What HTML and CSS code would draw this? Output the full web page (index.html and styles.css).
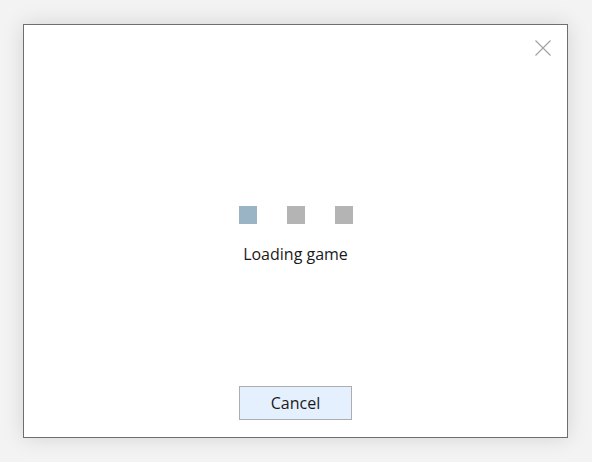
FILE: index.html
```html
<!DOCTYPE html>
<html>
<head>
<meta charset="utf-8">
<link rel="stylesheet" href="styles.css">
</head>
<body>
<div class="dialog">
  <button class="close" aria-label="Close">
    <svg width="16" height="16" viewBox="0 0 16 16"><path d="M0.5 0.5 L15.5 15.5 M15.5 0.5 L0.5 15.5" stroke="#a0a0a0" stroke-width="1.1" fill="none"/></svg>
  </button>
  <div class="content">
    <div class="dots">
      <span class="dot active"></span>
      <span class="dot"></span>
      <span class="dot"></span>
    </div>
    <div class="label">Loading game</div>
  </div>
  <div class="footer">
    <button class="btn">Cancel</button>
  </div>
</div>
</body>
</html>
```
FILE: styles.css
```css
html, body {
  margin: 0;
  padding: 0;
  background: #f3f3f3;
  font-family: "Open Sans", "Noto Sans", sans-serif;
}
body {
  padding: 24px 0 0 23px;
  height: 462px;
  box-sizing: border-box;
}
.dialog {
  position: relative;
  width: 545px;
  height: 414px;
  box-sizing: border-box;
  background: #fff;
  border: 1px solid #6e6e6e;
  box-shadow: 0 0 20px rgba(0,0,0,0.13);
  display: flex;
  flex-direction: column;
  align-items: center;
}
.close {
  position: absolute;
  top: 15px;
  right: 16px;
  width: 16px;
  height: 16px;
  padding: 0;
  border: 0;
  background: none;
  display: block;
}
.close svg { display: block; }
.content {
  margin-top: 181px;
  display: flex;
  flex-direction: column;
  align-items: center;
}
.dots {
  display: flex;
  gap: 30px;
}
.dot {
  width: 18px;
  height: 18px;
  background: #b4b4b4;
}
.dot.active { background: #9bb4c5; }
.label {
  margin-top: 20px;
  font-size: 16px;
  line-height: 20px;
  color: #1a1a1a;
}
.footer {
  margin-top: auto;
  margin-bottom: 17px;
}
.btn {
  width: 113px;
  height: 34px;
  box-sizing: border-box;
  background: #e5f0fe;
  border: 1px solid #adadad;
  font-family: inherit;
  font-size: 16px;
  color: #1a1a1a;
  padding: 0;
}
```
